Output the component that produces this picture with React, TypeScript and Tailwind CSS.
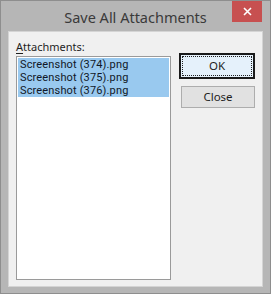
export default function App() {
  const files = ["Screenshot (374).png", "Screenshot (375).png", "Screenshot (376).png"];

  return (
    <div className="w-[271px] h-[296px] bg-white font-['Noto_Sans',sans-serif]">
      <div className="w-[271px] h-[294px] border border-[#8e8e8e] bg-[#b6b6b6] flex flex-col px-[7px] pb-[6px]">
        {/* title bar */}
        <div className="relative h-[30px] shrink-0 flex items-center justify-center">
          <span className="text-[14.5px] leading-none text-[#3a3a3a] mt-[2px]">Save All Attachments</span>
          <div className="absolute right-[1px] top-0 w-[30px] h-[21px] bg-[#c75050] flex items-center justify-center">
            <svg width="9" height="9" viewBox="0 0 9 9">
              <path d="M1 1 L8 8 M8 1 L1 8" stroke="white" strokeWidth="1.6" />
            </svg>
          </div>
        </div>

        {/* client area */}
        <div className="flex-1 bg-[#f0f0f0] border border-[#d4d4d4] flex pl-[7px] pr-[7px] pt-[7px] pb-[6px] gap-[8px]">
          <div className="flex flex-col w-[156px]">
            <div className="text-[11px] leading-[16px] text-[#1e1e1e] h-[17px]">
              <span className="underline underline-offset-2">A</span>ttachments:
            </div>
            <div className="flex-1 bg-white border border-[#9a9a9a] p-[1px]">
              {files.map((f) => (
                <div key={f} className="bg-[#99c9ef] font-['Roboto',sans-serif] text-[11px] leading-[13px] h-[13px] pl-[2px] text-[#111827] tracking-[0.15px]">
                  {f}
                </div>
              ))}
            </div>
          </div>

          <div className="flex flex-col items-stretch w-[76px] pt-[14px] gap-[7px]">
            <div className="h-[26px] border-2 border-[#1a1a1a] bg-[#e5f1fb] p-[1px]">
              <div className="h-full border border-dotted border-[#222] flex items-center justify-center text-[11.5px] text-[#1e1e1e]">
                OK
              </div>
            </div>
            <div className="ml-[2px] w-[74px] h-[22px] border border-[#adadad] bg-[#e1e1e1] flex items-center justify-center text-[11.5px] text-[#1e1e1e]">
              Close
            </div>
          </div>
        </div>
      </div>
    </div>
  );
}
